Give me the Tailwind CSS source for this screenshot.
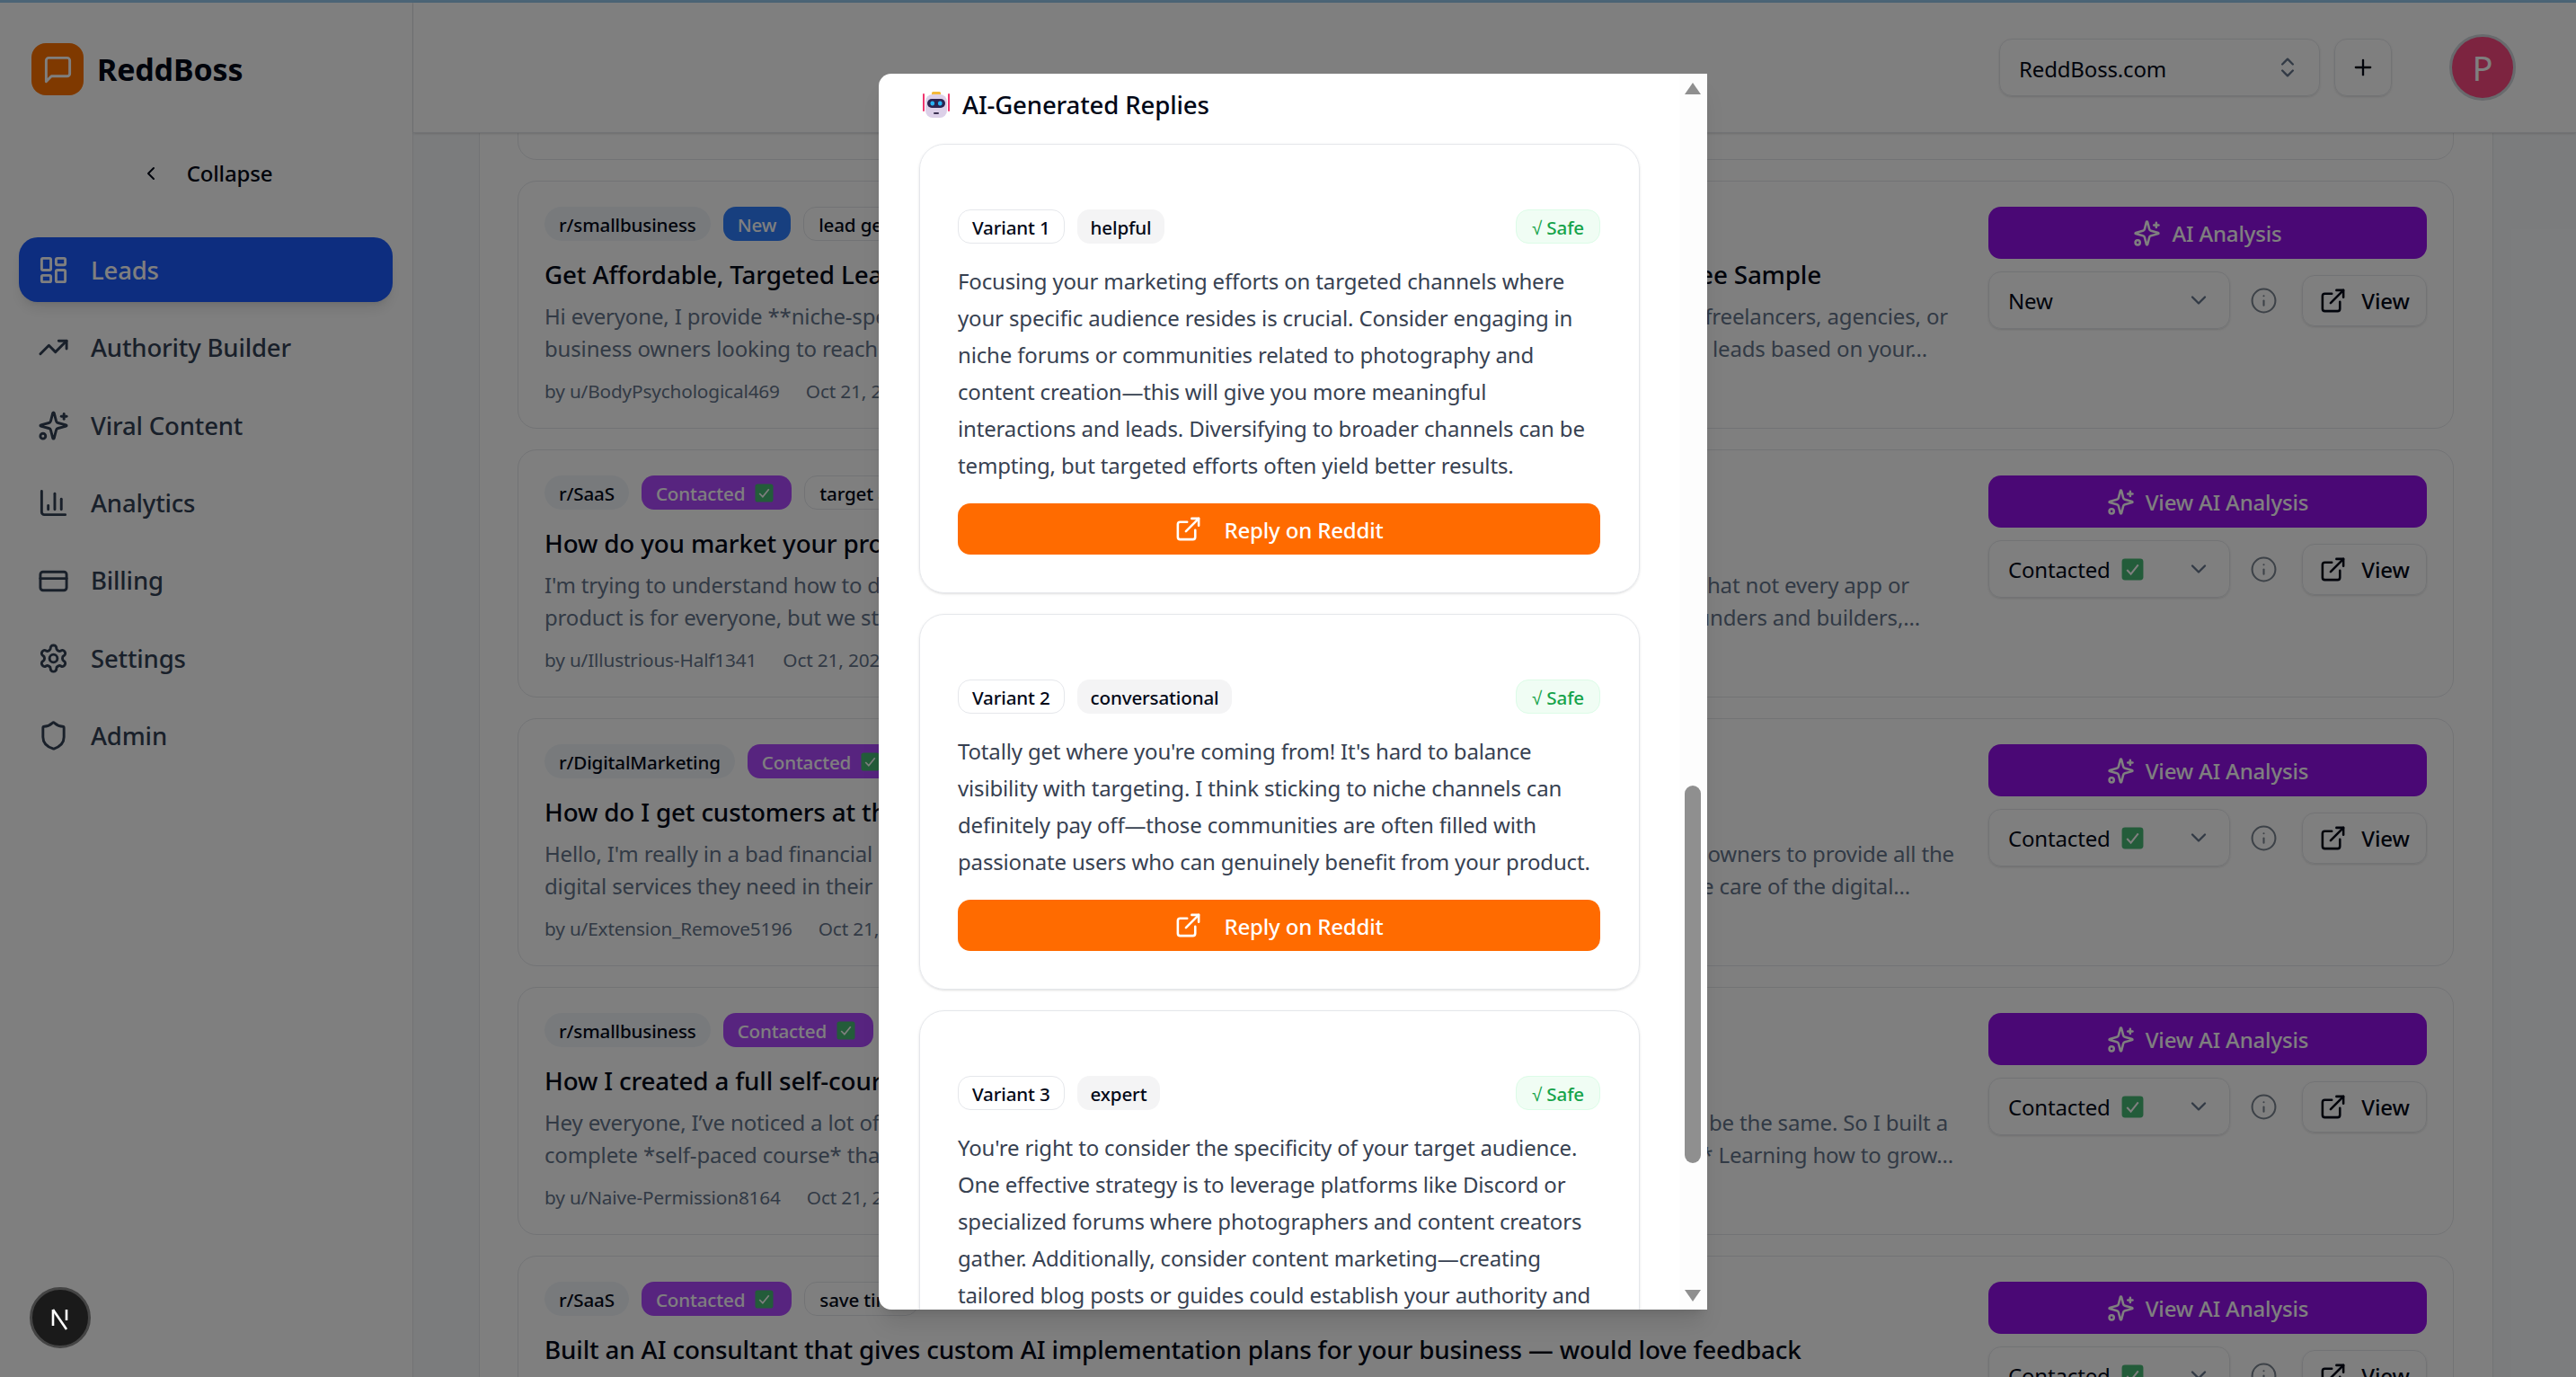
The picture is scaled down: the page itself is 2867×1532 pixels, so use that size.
<!DOCTYPE html>
<html lang="en">
<head>
    <meta charset="UTF-8">
    <title>ReddBoss - Leads</title>
    <script src="https://cdn.jsdelivr.net/npm/@tailwindcss/browser@4"></script>
</head>
<body class="font-['Noto_Sans',sans-serif] tracking-[-0.01em] text-[#020817] bg-white overflow-hidden">

    <!-- Icon sprite -->
    <svg class="hidden">
        <symbol id="i-spark" viewBox="0 0 24 24"><path d="M9.937 15.5A2 2 0 0 0 8.5 14.063l-6.135-1.582a.5.5 0 0 1 0-.962L8.5 9.936A2 2 0 0 0 9.937 8.5l1.582-6.135a.5.5 0 0 1 .963 0L14.063 8.5A2 2 0 0 0 15.5 9.937l6.135 1.581a.5.5 0 0 1 0 .964L15.5 14.063a2 2 0 0 0-1.437 1.437l-1.582 6.135a.5.5 0 0 1-.963 0z"/><path d="M20 3v4"/><path d="M22 5h-4"/><circle cx="4" cy="20" r="2"/></symbol>
        <symbol id="i-ext" viewBox="0 0 24 24"><path d="M15 3h6v6"/><path d="M10 14 21 3"/><path d="M18 13v6a2 2 0 0 1-2 2H5a2 2 0 0 1-2-2V8a2 2 0 0 1 2-2h6"/></symbol>
        <symbol id="i-info" viewBox="0 0 24 24"><circle cx="12" cy="12" r="10"/><path d="M12 16v-4"/><path d="M12 8h.01"/></symbol>
        <symbol id="i-down" viewBox="0 0 24 24"><path d="m6 9 6 6 6-6"/></symbol>
        <symbol id="i-check" viewBox="0 0 22 22"><rect x="0.5" y="0.5" width="21" height="21" rx="3" fill="#46b874" stroke="none"/><path d="M5.5 11.5l3.8 4 7.2-9" fill="none" stroke="#ffffff" stroke-width="1.8"/></symbol>
    </svg>

    <div class="relative w-[2867px] h-[1532px] flex flex-col overflow-hidden">
        <div class="h-[3px] bg-[#96c8ec] shrink-0"></div>

        <div class="flex flex-1 min-h-0">
            <!-- Sidebar -->
            <aside class="w-[460px] shrink-0 border-r border-[#e5e7eb] bg-white flex flex-col">
                <div class="flex items-center gap-[15px] pl-[35px] pt-[45px] h-[103px]">
                    <div class="w-[58px] h-[58px] rounded-[16px] bg-[#ff7300] flex items-center justify-center text-white">
                        <svg class="w-[35px] h-[35px]" viewBox="0 0 24 24" fill="none" stroke="currentColor" stroke-width="2" stroke-linecap="round" stroke-linejoin="round"><path d="M21 15a2 2 0 0 1-2 2H7l-4 4V5a2 2 0 0 1 2-2h14a2 2 0 0 1 2 2z"/></svg>
                    </div>
                    <span class="text-[34px] leading-none font-bold">ReddBoss</span>
                </div>
                <div class="mt-[60px] h-[54px] flex items-center justify-center gap-[28px] text-[24px] font-medium">
                    <svg class="w-[24px] h-[24px]" viewBox="0 0 24 24" fill="none" stroke="currentColor" stroke-width="2" stroke-linecap="round" stroke-linejoin="round"><path d="m15 18-6-6 6-6"/></svg>
                    <span>Collapse</span>
                </div>
                <nav class="mt-[44px] mx-[21px] w-[416px] flex flex-col gap-[14.4px] text-[27.5px] font-medium text-[#334155]">
                    <a class="h-[72px] pt-[1px] rounded-[21px] bg-[#1a5bff] text-white shadow-lg flex items-center gap-[24px] px-[21px]">
                        <svg class="w-[35px] h-[35px]" viewBox="0 0 24 24" fill="none" stroke="currentColor" stroke-width="2" stroke-linecap="round" stroke-linejoin="round"><rect width="7" height="9" x="3" y="3" rx="1"/><rect width="7" height="5" x="14" y="3" rx="1"/><rect width="7" height="9" x="14" y="12" rx="1"/><rect width="7" height="5" x="3" y="16" rx="1"/></svg>
                        <span>Leads</span>
                    </a>
                    <a class="h-[72px] pt-[1px] flex items-center gap-[24px] px-[21px]">
                        <svg class="w-[35px] h-[35px]" viewBox="0 0 24 24" fill="none" stroke="currentColor" stroke-width="2" stroke-linecap="round" stroke-linejoin="round"><polyline points="22 7 13.5 15.5 8.5 10.5 2 17"/><polyline points="16 7 22 7 22 13"/></svg>
                        <span>Authority Builder</span>
                    </a>
                    <a class="h-[72px] pt-[1px] flex items-center gap-[24px] px-[21px]">
                        <svg class="w-[35px] h-[35px]" fill="none" stroke="currentColor" stroke-width="2" stroke-linecap="round" stroke-linejoin="round"><use href="#i-spark"/></svg>
                        <span>Viral Content</span>
                    </a>
                    <a class="h-[72px] pt-[1px] flex items-center gap-[24px] px-[21px]">
                        <svg class="w-[35px] h-[35px]" viewBox="0 0 24 24" fill="none" stroke="currentColor" stroke-width="2" stroke-linecap="round" stroke-linejoin="round"><path d="M3 3v16a2 2 0 0 0 2 2h16"/><path d="M18 17V9"/><path d="M13 17V5"/><path d="M8 17v-3"/></svg>
                        <span>Analytics</span>
                    </a>
                    <a class="h-[72px] pt-[1px] flex items-center gap-[24px] px-[21px]">
                        <svg class="w-[35px] h-[35px]" viewBox="0 0 24 24" fill="none" stroke="currentColor" stroke-width="2" stroke-linecap="round" stroke-linejoin="round"><rect width="20" height="14" x="2" y="5" rx="2"/><line x1="2" x2="22" y1="10" y2="10"/></svg>
                        <span>Billing</span>
                    </a>
                    <a class="h-[72px] pt-[1px] flex items-center gap-[24px] px-[21px]">
                        <svg class="w-[35px] h-[35px]" viewBox="0 0 24 24" fill="none" stroke="currentColor" stroke-width="2" stroke-linecap="round" stroke-linejoin="round"><path d="M12.22 2h-.44a2 2 0 0 0-2 2v.18a2 2 0 0 1-1 1.73l-.43.25a2 2 0 0 1-2 0l-.15-.08a2 2 0 0 0-2.73.73l-.22.38a2 2 0 0 0 .73 2.73l.15.1a2 2 0 0 1 1 1.72v.51a2 2 0 0 1-1 1.74l-.15.09a2 2 0 0 0-.73 2.73l.22.38a2 2 0 0 0 2.73.73l.15-.08a2 2 0 0 1 2 0l.43.25a2 2 0 0 1 1 1.73V20a2 2 0 0 0 2 2h.44a2 2 0 0 0 2-2v-.18a2 2 0 0 1 1-1.73l.43-.25a2 2 0 0 1 2 0l.15.08a2 2 0 0 0 2.73-.73l.22-.39a2 2 0 0 0-.73-2.73l-.15-.08a2 2 0 0 1-1-1.74v-.5a2 2 0 0 1 1-1.74l.15-.09a2 2 0 0 0 .73-2.73l-.22-.38a2 2 0 0 0-2.73-.73l-.15.08a2 2 0 0 1-2 0l-.43-.25a2 2 0 0 1-1-1.73V4a2 2 0 0 0-2-2z"/><circle cx="12" cy="12" r="3"/></svg>
                        <span>Settings</span>
                    </a>
                    <a class="h-[72px] pt-[1px] flex items-center gap-[24px] px-[21px]">
                        <svg class="w-[35px] h-[35px]" viewBox="0 0 24 24" fill="none" stroke="currentColor" stroke-width="2" stroke-linecap="round" stroke-linejoin="round"><path d="M20 13c0 5-3.5 7.5-7.66 8.95a1 1 0 0 1-.67-.01C7.5 20.5 4 18 4 13V6a1 1 0 0 1 1-1c2 0 4.5-1.2 6.24-2.72a1.17 1.17 0 0 1 1.52 0C14.51 3.81 17 5 19 5a1 1 0 0 1 1 1z"/></svg>
                        <span>Admin</span>
                    </a>
                </nav>
            </aside>

            <!-- Main column -->
            <div class="flex-1 min-w-0 flex flex-col bg-[#f7f9fb]">
                <header class="relative z-10 h-[145px] shrink-0 bg-white border-b border-[#e5e7eb] shadow-sm flex items-center justify-end pr-[67px] gap-[16px]">
                    <div class="w-[357px] h-[64px] rounded-[14px] border border-[#e5e7eb] shadow-sm flex items-center justify-between pl-[21px] pr-[21px] text-[24px]">
                        <span class="pt-[3px]">ReddBoss.com</span>
                        <svg class="w-[28px] h-[28px] text-[#64748b]" viewBox="0 0 24 24" fill="none" stroke="currentColor" stroke-width="2" stroke-linecap="round" stroke-linejoin="round"><path d="m7 15 5 5 5-5"/><path d="m7 9 5-5 5 5"/></svg>
                    </div>
                    <div class="w-[64px] h-[64px] rounded-[14px] border border-[#e5e7eb] shadow-sm flex items-center justify-center">
                        <svg class="w-[28px] h-[28px]" viewBox="0 0 24 24" fill="none" stroke="currentColor" stroke-width="2" stroke-linecap="round" stroke-linejoin="round"><path d="M5 12h14"/><path d="M12 5v14"/></svg>
                    </div>
                    <div class="ml-[48px] w-[74px] h-[74px] rounded-full bg-[#fa4880] border-[3px] border-[#d1d5db] flex items-center justify-center text-[38px] text-white">P</div>
                </header>

                <div class="flex-1 min-h-0 overflow-hidden pl-[73px] pr-[92px]">
                    <div class="flow-root border-x border-[#e5e7eb] h-full bg-white pl-[42px] pr-[43px]">
                        <div class="-mt-[246px] flex flex-col gap-[23px]">
                            <div class="h-[276px] rounded-[21px] border border-[#e5e7eb]"></div>

                            <!-- Lead 1 -->
                            <article class="h-[276px] rounded-[21px] border border-[#e5e7eb] flex justify-between pl-[29px] pr-[29px] pt-[28px] overflow-hidden">
                                <div class="w-[1590px] min-w-0">
                                    <div class="flex gap-[14px] text-[20.6px] font-medium">
                                        <span class="h-[38px] px-[16px] pt-[2px] flex items-center rounded-full bg-[#f1f5f9]">r/smallbusiness</span>
                                        <span class="h-[38px] px-[16px] pt-[2px] flex items-center rounded-[14px] bg-[#2f7fff] text-white">New</span>
                                        <span class="h-[38px] px-[16px] pt-[2px] flex items-center rounded-[14px] border border-[#e5e7eb]">lead generation</span>
                                    </div>
                                    <div class="mt-[13px] flex justify-between w-[1421px] text-[27.8px] leading-[49px] font-medium"><span>Get Affordable, Targeted Leads</span><span>Free Sample</span></div>
                                    <div class="mt-[4px] text-[24px] leading-[36px] text-[#64748b]">
                                        <div class="flex justify-between w-[1562px]"><span>Hi everyone, I provide **niche-specific</span><span>freelancers, agencies, or</span></div>
                                        <div class="flex justify-between w-[1539px]"><span>business owners looking to reach</span><span>leads based on your...</span></div>
                                    </div>
                                    <div class="mt-[15px] flex gap-[29px] text-[20.8px] leading-[28px] text-[#64748b]"><span>by u/BodyPsychological469</span><span>Oct 21, 2025</span></div>
                                </div>
                                <div class="w-[488px] shrink-0">
                                    <button class="w-full h-[58px] rounded-[14px] bg-[#9410ea] text-white text-[24px] font-medium flex items-center justify-center gap-[12px]">
                                        <svg class="w-[31px] h-[31px]" fill="none" stroke="currentColor" stroke-width="2" stroke-linecap="round" stroke-linejoin="round"><use href="#i-spark"/></svg>
                                        <span class="pt-[2px]">AI Analysis</span>
                                    </button>
                                    <div class="mt-[14px] flex items-center justify-between">
                                        <div class="w-[269px] h-[64px] rounded-[14px] border border-[#e5e7eb] shadow-sm flex items-center justify-between pl-[21px] pr-[20px] text-[24px]">
                                            <span class="pt-[2px]">New</span>
                                            <svg class="w-[28px] h-[28px] text-[#64748b]" fill="none" stroke="currentColor" stroke-width="2" stroke-linecap="round" stroke-linejoin="round"><use href="#i-down"/></svg>
                                        </div>
                                        <svg class="w-[31px] h-[31px] mr-[6px] text-[#7a8490]" fill="none" stroke="currentColor" stroke-width="1.6" stroke-linecap="round" stroke-linejoin="round"><use href="#i-info"/></svg>
                                        <div class="w-[139px] h-[57px] rounded-[14px] border border-[#e5e7eb] shadow-sm flex items-center justify-center gap-[16px] text-[24px] font-medium">
                                            <svg class="w-[31px] h-[31px]" fill="none" stroke="currentColor" stroke-width="2" stroke-linecap="round" stroke-linejoin="round"><use href="#i-ext"/></svg>
                                            <span class="pt-[2px]">View</span>
                                        </div>
                                    </div>
                                </div>
                            </article>

                            <!-- Lead 2 -->
                            <article class="h-[276px] rounded-[21px] border border-[#e5e7eb] flex justify-between pl-[29px] pr-[29px] pt-[28px] overflow-hidden">
                                <div class="w-[1590px] min-w-0">
                                    <div class="flex gap-[14px] text-[20.6px] font-medium">
                                        <span class="h-[38px] px-[16px] pt-[2px] flex items-center rounded-full bg-[#f1f5f9]">r/SaaS</span>
                                        <span class="h-[38px] pl-[16px] pr-[20px] flex items-center gap-[11px] rounded-[14px] bg-[#ae48fe] text-white"><span class="pt-[2px]">Contacted</span> <svg class="w-[21px] h-[21px]"><use href="#i-check"/></svg></span>
                                        <span class="h-[38px] px-[16px] pt-[2px] flex items-center rounded-[14px] border border-[#e5e7eb]">target audience</span>
                                    </div>
                                    <div class="mt-[13px] text-[27.8px] leading-[49px] font-medium">How do you market your product</div>
                                    <div class="mt-[4px] text-[24px] leading-[36px] text-[#64748b]">
                                        <div class="flex justify-between w-[1519px]"><span>I'm trying to understand how to do</span><span>that not every app or</span></div>
                                        <div class="flex justify-between w-[1531px]"><span>product is for everyone, but we still</span><span>founders and builders,...</span></div>
                                    </div>
                                    <div class="mt-[15px] flex gap-[29px] text-[20.8px] leading-[28px] text-[#64748b]"><span>by u/Illustrious-Half1341</span><span>Oct 21, 2025</span></div>
                                </div>
                                <div class="w-[488px] shrink-0">
                                    <button class="w-full h-[58px] rounded-[14px] bg-[#9410ea] text-white text-[24px] font-medium flex items-center justify-center gap-[12px]">
                                        <svg class="w-[31px] h-[31px]" fill="none" stroke="currentColor" stroke-width="2" stroke-linecap="round" stroke-linejoin="round"><use href="#i-spark"/></svg>
                                        <span class="pt-[2px]">View AI Analysis</span>
                                    </button>
                                    <div class="mt-[14px] flex items-center justify-between">
                                        <div class="w-[269px] h-[64px] rounded-[14px] border border-[#e5e7eb] shadow-sm flex items-center justify-between pl-[21px] pr-[20px] text-[24px]">
                                            <span class="flex items-center gap-[12px]"><span class="pt-[2px]">Contacted</span> <svg class="w-[25px] h-[25px]"><use href="#i-check"/></svg></span>
                                            <svg class="w-[28px] h-[28px] text-[#64748b]" fill="none" stroke="currentColor" stroke-width="2" stroke-linecap="round" stroke-linejoin="round"><use href="#i-down"/></svg>
                                        </div>
                                        <svg class="w-[31px] h-[31px] mr-[6px] text-[#7a8490]" fill="none" stroke="currentColor" stroke-width="1.6" stroke-linecap="round" stroke-linejoin="round"><use href="#i-info"/></svg>
                                        <div class="w-[139px] h-[57px] rounded-[14px] border border-[#e5e7eb] shadow-sm flex items-center justify-center gap-[16px] text-[24px] font-medium">
                                            <svg class="w-[31px] h-[31px]" fill="none" stroke="currentColor" stroke-width="2" stroke-linecap="round" stroke-linejoin="round"><use href="#i-ext"/></svg>
                                            <span class="pt-[2px]">View</span>
                                        </div>
                                    </div>
                                </div>
                            </article>

                            <!-- Lead 3 -->
                            <article class="h-[276px] rounded-[21px] border border-[#e5e7eb] flex justify-between pl-[29px] pr-[29px] pt-[28px] overflow-hidden">
                                <div class="w-[1590px] min-w-0">
                                    <div class="flex gap-[14px] text-[20.6px] font-medium">
                                        <span class="h-[38px] px-[16px] pt-[2px] flex items-center rounded-full bg-[#f1f5f9]">r/DigitalMarketing</span>
                                        <span class="h-[38px] pl-[16px] pr-[20px] flex items-center gap-[11px] rounded-[14px] bg-[#ae48fe] text-white"><span class="pt-[2px]">Contacted</span> <svg class="w-[21px] h-[21px]"><use href="#i-check"/></svg></span>
                                    </div>
                                    <div class="mt-[13px] text-[27.8px] leading-[49px] font-medium">How do I get customers at the</div>
                                    <div class="mt-[4px] text-[24px] leading-[36px] text-[#64748b]">
                                        <div class="flex justify-between w-[1569px]"><span>Hello, I'm really in a bad financial</span><span>owners to provide all the</span></div>
                                        <div class="flex justify-between w-[1520px]"><span>digital services they need in their</span><span>e care of the digital...</span></div>
                                    </div>
                                    <div class="mt-[15px] flex gap-[29px] text-[20.8px] leading-[28px] text-[#64748b]"><span>by u/Extension_Remove5196</span><span>Oct 21, 2025</span></div>
                                </div>
                                <div class="w-[488px] shrink-0">
                                    <button class="w-full h-[58px] rounded-[14px] bg-[#9410ea] text-white text-[24px] font-medium flex items-center justify-center gap-[12px]">
                                        <svg class="w-[31px] h-[31px]" fill="none" stroke="currentColor" stroke-width="2" stroke-linecap="round" stroke-linejoin="round"><use href="#i-spark"/></svg>
                                        <span class="pt-[2px]">View AI Analysis</span>
                                    </button>
                                    <div class="mt-[14px] flex items-center justify-between">
                                        <div class="w-[269px] h-[64px] rounded-[14px] border border-[#e5e7eb] shadow-sm flex items-center justify-between pl-[21px] pr-[20px] text-[24px]">
                                            <span class="flex items-center gap-[12px]"><span class="pt-[2px]">Contacted</span> <svg class="w-[25px] h-[25px]"><use href="#i-check"/></svg></span>
                                            <svg class="w-[28px] h-[28px] text-[#64748b]" fill="none" stroke="currentColor" stroke-width="2" stroke-linecap="round" stroke-linejoin="round"><use href="#i-down"/></svg>
                                        </div>
                                        <svg class="w-[31px] h-[31px] mr-[6px] text-[#7a8490]" fill="none" stroke="currentColor" stroke-width="1.6" stroke-linecap="round" stroke-linejoin="round"><use href="#i-info"/></svg>
                                        <div class="w-[139px] h-[57px] rounded-[14px] border border-[#e5e7eb] shadow-sm flex items-center justify-center gap-[16px] text-[24px] font-medium">
                                            <svg class="w-[31px] h-[31px]" fill="none" stroke="currentColor" stroke-width="2" stroke-linecap="round" stroke-linejoin="round"><use href="#i-ext"/></svg>
                                            <span class="pt-[2px]">View</span>
                                        </div>
                                    </div>
                                </div>
                            </article>

                            <!-- Lead 4 -->
                            <article class="h-[276px] rounded-[21px] border border-[#e5e7eb] flex justify-between pl-[29px] pr-[29px] pt-[28px] overflow-hidden">
                                <div class="w-[1590px] min-w-0">
                                    <div class="flex gap-[14px] text-[20.6px] font-medium">
                                        <span class="h-[38px] px-[16px] pt-[2px] flex items-center rounded-full bg-[#f1f5f9]">r/smallbusiness</span>
                                        <span class="h-[38px] pl-[16px] pr-[20px] flex items-center gap-[11px] rounded-[14px] bg-[#ae48fe] text-white"><span class="pt-[2px]">Contacted</span> <svg class="w-[21px] h-[21px]"><use href="#i-check"/></svg></span>
                                    </div>
                                    <div class="mt-[13px] text-[27.8px] leading-[49px] font-medium">How I created a full self-course</div>
                                    <div class="mt-[4px] text-[24px] leading-[36px] text-[#64748b]">
                                        <div class="flex justify-between w-[1562px]"><span>Hey everyone, I’ve noticed a lot of</span><span>be the same. So I built a</span></div>
                                        <div class="flex justify-between w-[1568px]"><span>complete *self-paced course* that</span><span>* Learning how to grow...</span></div>
                                    </div>
                                    <div class="mt-[15px] flex gap-[29px] text-[20.8px] leading-[28px] text-[#64748b]"><span>by u/Naive-Permission8164</span><span>Oct 21, 2025</span></div>
                                </div>
                                <div class="w-[488px] shrink-0">
                                    <button class="w-full h-[58px] rounded-[14px] bg-[#9410ea] text-white text-[24px] font-medium flex items-center justify-center gap-[12px]">
                                        <svg class="w-[31px] h-[31px]" fill="none" stroke="currentColor" stroke-width="2" stroke-linecap="round" stroke-linejoin="round"><use href="#i-spark"/></svg>
                                        <span class="pt-[2px]">View AI Analysis</span>
                                    </button>
                                    <div class="mt-[14px] flex items-center justify-between">
                                        <div class="w-[269px] h-[64px] rounded-[14px] border border-[#e5e7eb] shadow-sm flex items-center justify-between pl-[21px] pr-[20px] text-[24px]">
                                            <span class="flex items-center gap-[12px]"><span class="pt-[2px]">Contacted</span> <svg class="w-[25px] h-[25px]"><use href="#i-check"/></svg></span>
                                            <svg class="w-[28px] h-[28px] text-[#64748b]" fill="none" stroke="currentColor" stroke-width="2" stroke-linecap="round" stroke-linejoin="round"><use href="#i-down"/></svg>
                                        </div>
                                        <svg class="w-[31px] h-[31px] mr-[6px] text-[#7a8490]" fill="none" stroke="currentColor" stroke-width="1.6" stroke-linecap="round" stroke-linejoin="round"><use href="#i-info"/></svg>
                                        <div class="w-[139px] h-[57px] rounded-[14px] border border-[#e5e7eb] shadow-sm flex items-center justify-center gap-[16px] text-[24px] font-medium">
                                            <svg class="w-[31px] h-[31px]" fill="none" stroke="currentColor" stroke-width="2" stroke-linecap="round" stroke-linejoin="round"><use href="#i-ext"/></svg>
                                            <span class="pt-[2px]">View</span>
                                        </div>
                                    </div>
                                </div>
                            </article>

                            <!-- Lead 5 -->
                            <article class="h-[276px] rounded-[21px] border border-[#e5e7eb] flex justify-between pl-[29px] pr-[29px] pt-[28px] overflow-hidden">
                                <div class="w-[1590px] min-w-0">
                                    <div class="flex gap-[14px] text-[20.6px] font-medium">
                                        <span class="h-[38px] px-[16px] pt-[2px] flex items-center rounded-full bg-[#f1f5f9]">r/SaaS</span>
                                        <span class="h-[38px] pl-[16px] pr-[20px] flex items-center gap-[11px] rounded-[14px] bg-[#ae48fe] text-white"><span class="pt-[2px]">Contacted</span> <svg class="w-[21px] h-[21px]"><use href="#i-check"/></svg></span>
                                        <span class="h-[38px] px-[16px] pt-[2px] flex items-center rounded-[14px] border border-[#e5e7eb]">save time</span>
                                    </div>
                                    <div class="mt-[13px] text-[27.8px] leading-[49px] font-medium whitespace-nowrap">Built an AI consultant that gives custom AI implementation plans for your business — would love feedback</div>
                                </div>
                                <div class="w-[488px] shrink-0">
                                    <button class="w-full h-[58px] rounded-[14px] bg-[#9410ea] text-white text-[24px] font-medium flex items-center justify-center gap-[12px]">
                                        <svg class="w-[31px] h-[31px]" fill="none" stroke="currentColor" stroke-width="2" stroke-linecap="round" stroke-linejoin="round"><use href="#i-spark"/></svg>
                                        <span class="pt-[2px]">View AI Analysis</span>
                                    </button>
                                    <div class="mt-[14px] flex items-center justify-between">
                                        <div class="w-[269px] h-[64px] rounded-[14px] border border-[#e5e7eb] shadow-sm flex items-center justify-between pl-[21px] pr-[20px] text-[24px]">
                                            <span class="flex items-center gap-[12px]"><span class="pt-[2px]">Contacted</span> <svg class="w-[25px] h-[25px]"><use href="#i-check"/></svg></span>
                                            <svg class="w-[28px] h-[28px] text-[#64748b]" fill="none" stroke="currentColor" stroke-width="2" stroke-linecap="round" stroke-linejoin="round"><use href="#i-down"/></svg>
                                        </div>
                                        <svg class="w-[31px] h-[31px] mr-[6px] text-[#7a8490]" fill="none" stroke="currentColor" stroke-width="1.6" stroke-linecap="round" stroke-linejoin="round"><use href="#i-info"/></svg>
                                        <div class="w-[139px] h-[57px] rounded-[14px] border border-[#e5e7eb] shadow-sm flex items-center justify-center gap-[16px] text-[24px] font-medium">
                                            <svg class="w-[31px] h-[31px]" fill="none" stroke="currentColor" stroke-width="2" stroke-linecap="round" stroke-linejoin="round"><use href="#i-ext"/></svg>
                                            <span class="pt-[2px]">View</span>
                                        </div>
                                    </div>
                                </div>
                            </article>
                        </div>
                    </div>
                </div>
            </div>
        </div>

        <!-- Dim overlay -->
        <div class="absolute inset-0 z-40 bg-black/50"></div>

        <!-- Next dev badge -->
        <div class="absolute z-50 left-[33px] top-[1432px] w-[68px] h-[68px] rounded-full bg-[#1a1a1a] border-[3px] border-[#444444] flex items-center justify-center">
            <svg class="w-[34px] h-[34px]" viewBox="0 0 34 34" fill="none"><path d="M9 8v18" stroke="#ffffff" stroke-width="2.6"/><path d="M9 8l15 22" stroke="#ffffff" stroke-width="2.6"/><path d="M24 8v12" stroke="#ffffff" stroke-width="2.6"/></svg>
        </div>

        <!-- AI replies modal -->
        <div class="absolute z-50 left-[978px] top-[82px] w-[922px] h-[1375px] bg-white rounded-l-[14px] shadow-xl overflow-hidden flex flex-col">
            <div class="h-[70px] shrink-0 flex items-center gap-[14px] pl-[49px] text-[27.6px] font-medium text-[#020817]">
                <svg class="w-[30px] h-[30px]" viewBox="0 0 30 30">
                    <rect x="10" y="0" width="10" height="4" rx="1.5" fill="#f4b93a"/>
                    <rect x="0" y="2" width="2" height="20" rx="1" fill="#f0356f"/>
                    <rect x="28" y="2" width="2" height="20" rx="1" fill="#f0356f"/>
                    <rect x="3" y="3" width="24" height="26" rx="8" fill="#dcd0e8"/>
                    <rect x="5" y="8" width="20" height="10" rx="5" fill="#2b2350"/>
                    <rect x="8.5" y="10.5" width="4.5" height="5" rx="2" fill="#27b4f5"/>
                    <rect x="17" y="10.5" width="4.5" height="5" rx="2" fill="#27b4f5"/>
                    <rect x="12" y="23" width="6" height="2" rx="1" fill="#3b3252"/>
                </svg>
                <h2>AI-Generated Replies</h2>
            </div>
            <div class="flex-1 min-h-0 overflow-hidden pl-[45px] pr-[75px] pt-[8px] flex flex-col gap-[23px]">
                <!-- Variant 1 -->
                <div class="shrink-0 rounded-[28px] border border-[#e5e7eb] shadow-sm pl-[42px] pr-[43px] pt-[72px] pb-[42px]">
                    <div class="flex items-center gap-[14px] text-[20.6px] font-medium">
                        <span class="h-[38px] px-[15px] pt-[2px] flex items-center rounded-[14px] border border-[#e5e7eb]">Variant 1</span>
                        <span class="h-[38px] px-[15px] pt-[2px] flex items-center rounded-[14px] bg-[#f4f4f5]">helpful</span>
                        <span class="ml-auto h-[38px] px-[17px] pt-[2px] flex items-center rounded-[14px] border border-[#dcfce7] bg-[#f0fdf4] text-[#16a34a]">√ Safe</span>
                    </div>
                    <p class="mt-[21px] text-[24px] leading-[41px] text-[#374151] whitespace-nowrap">Focusing your marketing efforts on targeted channels where<br>your specific audience resides is crucial. Consider engaging in<br>niche forums or communities related to photography and<br>content creation—this will give you more meaningful<br>interactions and leads. Diversifying to broader channels can be<br>tempting, but targeted efforts often yield better results.</p>
                    <button class="mt-[22px] w-full h-[57px] rounded-[14px] bg-[#ff6b00] text-white text-[24px] font-medium flex items-center justify-center gap-[24px]">
                        <svg class="w-[31px] h-[31px]" fill="none" stroke="currentColor" stroke-width="2" stroke-linecap="round" stroke-linejoin="round"><use href="#i-ext"/></svg>
                        <span class="pt-[2px]">Reply on Reddit</span>
                    </button>
                </div>
                <!-- Variant 2 -->
                <div class="shrink-0 rounded-[28px] border border-[#e5e7eb] shadow-sm pl-[42px] pr-[43px] pt-[72px] pb-[42px]">
                    <div class="flex items-center gap-[14px] text-[20.6px] font-medium">
                        <span class="h-[38px] px-[15px] pt-[2px] flex items-center rounded-[14px] border border-[#e5e7eb]">Variant 2</span>
                        <span class="h-[38px] px-[15px] pt-[2px] flex items-center rounded-[14px] bg-[#f4f4f5]">conversational</span>
                        <span class="ml-auto h-[38px] px-[17px] pt-[2px] flex items-center rounded-[14px] border border-[#dcfce7] bg-[#f0fdf4] text-[#16a34a]">√ Safe</span>
                    </div>
                    <p class="mt-[21px] text-[24px] leading-[41px] text-[#374151] whitespace-nowrap">Totally get where you're coming from! It's hard to balance<br>visibility with targeting. I think sticking to niche channels can<br>definitely pay off—those communities are often filled with<br>passionate users who can genuinely benefit from your product.</p>
                    <button class="mt-[22px] w-full h-[57px] rounded-[14px] bg-[#ff6b00] text-white text-[24px] font-medium flex items-center justify-center gap-[24px]">
                        <svg class="w-[31px] h-[31px]" fill="none" stroke="currentColor" stroke-width="2" stroke-linecap="round" stroke-linejoin="round"><use href="#i-ext"/></svg>
                        <span class="pt-[2px]">Reply on Reddit</span>
                    </button>
                </div>
                <!-- Variant 3 -->
                <div class="shrink-0 rounded-[28px] border border-[#e5e7eb] shadow-sm pl-[42px] pr-[43px] pt-[72px] pb-[42px]">
                    <div class="flex items-center gap-[14px] text-[20.6px] font-medium">
                        <span class="h-[38px] px-[15px] pt-[2px] flex items-center rounded-[14px] border border-[#e5e7eb]">Variant 3</span>
                        <span class="h-[38px] px-[15px] pt-[2px] flex items-center rounded-[14px] bg-[#f4f4f5]">expert</span>
                        <span class="ml-auto h-[38px] px-[17px] pt-[2px] flex items-center rounded-[14px] border border-[#dcfce7] bg-[#f0fdf4] text-[#16a34a]">√ Safe</span>
                    </div>
                    <p class="mt-[21px] text-[24px] leading-[41px] text-[#374151] whitespace-nowrap">You're right to consider the specificity of your target audience.<br>One effective strategy is to leverage platforms like Discord or<br>specialized forums where photographers and content creators<br>gather. Additionally, consider content marketing—creating<br>tailored blog posts or guides could establish your authority and</p>
                </div>
            </div>
            <!-- Scrollbar -->
            <div class="absolute right-0 top-0 bottom-0 w-[31px] bg-[#fdfdfd]">
                <div class="absolute left-[6px] top-[10px] w-0 h-0 border-x-[9px] border-x-transparent border-b-[13px] border-b-[#8f8f8f]"></div>
                <div class="absolute left-[6px] top-[792px] w-[18px] h-[420px] rounded-full bg-[#8f8f8f]"></div>
                <div class="absolute left-[6px] bottom-[9px] w-0 h-0 border-x-[9px] border-x-transparent border-t-[13px] border-t-[#8f8f8f]"></div>
            </div>
        </div>
    </div>
</body>
</html>
